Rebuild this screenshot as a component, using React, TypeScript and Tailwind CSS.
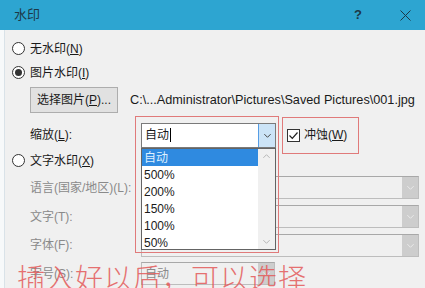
import React from "react";

const font = { fontFamily: '"Segoe UI", "Liberation Sans", "Noto Sans CJK SC", sans-serif' };

function Radio({ checked }: { checked?: boolean }) {
  return (
    <div className="w-[13px] h-[13px] rounded-full border border-[#333] bg-white flex items-center justify-center shrink-0">
      {checked && <div className="w-[7px] h-[7px] rounded-full bg-[#333]" />}
    </div>
  );
}

function Chevron({ color = "#777", size = 9 }: { color?: string; size?: number }) {
  return (
    <svg width={size} height={size} viewBox="0 0 10 10">
      <path d="M1.5 3.5 L5 7 L8.5 3.5" fill="none" stroke={color} strokeWidth="1.1" />
    </svg>
  );
}

function DisabledCombo({ w, text }: { w: string; text?: string }) {
  return (
    <div className={`${w} h-[23px] border border-[#bdbdbd] border-t-[#a8a8a8] bg-[#f0f0f0] flex items-center`}>
      <div className="flex-1 pl-[3px] text-[12px] text-[#8a8a8a]">{text}</div>
      <div className="w-[16px] h-full bg-[#cdcdcd] flex items-center justify-center">
        <Chevron color="#e9e9e9" />
      </div>
    </div>
  );
}

export default function App() {
  return (
    <div className="w-[425px] h-[288px] overflow-hidden relative bg-[#f0f0f0] text-[#1a1a1a]" style={font}>
      {/* title bar */}
      <div className="h-[30px] bg-[#2da5d1] flex items-center pl-[14px] pr-[14px]">
        <div className="text-[13px] text-[#1d3846] flex-1">水印</div>
        <div className="text-[13px] text-[#1d3846] font-bold mr-[38px]">?</div>
        <svg width="11" height="11" viewBox="0 0 11 11">
          <path d="M0.5 0.5 L10.5 10.5 M10.5 0.5 L0.5 10.5" stroke="#1d3846" strokeWidth="1" />
        </svg>
      </div>

      <div className="flex h-[258px]">
        <div className="w-[5px] bg-[#f7f9fa] border-r border-[#d9e2e8]" />
        <div className="flex-1 flex flex-col text-[12px] pl-[7px]">
          {/* 无水印 */}
          <div className="mt-[7px] h-[24px] flex items-center gap-[5px]">
            <Radio />
            <span>无水印(<u>N</u>)</span>
          </div>
          {/* 图片水印 */}
          <div className="h-[24px] flex items-center gap-[5px]">
            <Radio checked />
            <span>图片水印(<u>I</u>)</span>
          </div>
          {/* button row */}
          <div className="mt-[3px] h-[26px] flex items-center pl-[18px]">
            <div className="w-[88px] h-[26px] bg-[#e1e1e1] border border-[#adadad] flex items-center justify-center">
              选择图片(<u>P</u>)...
            </div>
            <div className="ml-[12px] whitespace-nowrap text-[12.7px]">
              C:\...Administrator\Pictures\Saved Pictures\001.jpg
            </div>
          </div>
          {/* 缩放 */}
          <div className="mt-[9px] h-[26px] flex items-center pl-[18px]">
            <div className="w-[111px]">缩放(<u>L</u>):</div>
            <div className="w-[135px] h-[25px] bg-white border border-[#7a7a7a] flex items-center">
              <div className="flex-1 pl-[3px] flex items-center">
                自动<span className="inline-block w-[1px] h-[14px] bg-black ml-[1px]" />
              </div>
              <div className="w-[17px] h-full bg-[#cce4f7] border-l border-[#569de5] flex items-center justify-center">
                <Chevron color="#444" />
              </div>
            </div>
            <div className="ml-[11px] flex items-center gap-[4px]">
              <div className="w-[13px] h-[13px] border border-[#333] bg-white flex items-center justify-center">
                <svg width="11" height="11" viewBox="0 0 11 11">
                  <path d="M1.5 5.5 L4.3 8.3 L9.5 2.5" fill="none" stroke="#222" strokeWidth="1.2" />
                </svg>
              </div>
              <span>冲蚀(<u>W</u>)</span>
            </div>
          </div>
          {/* 文字水印 */}
          <div className="h-[26px] flex items-center gap-[5px]">
            <Radio />
            <span>文字水印(<u>X</u>)</span>
          </div>
          {/* disabled rows */}
          {[
            ["语言(国家/地区)(L):", "w-[278px]", ""],
            ["文字(T):", "w-[278px]", ""],
            ["字体(F):", "w-[278px]", ""],
            ["字号(S):", "w-[134px]", "自动"],
          ].map(([label, w, t]) => (
            <div key={label} className="h-[29px] flex items-center pl-[18px]">
              <div className="w-[111px] text-[#8a8a8a]">{label}</div>
              <DisabledCombo w={w} text={t} />
            </div>
          ))}
        </div>
      </div>

      {/* dropdown list */}
      <div className="absolute left-[141px] top-[148px] w-[135px] h-[102px] bg-white border border-[#646464] flex text-[12px]">
        <div className="flex-1 flex flex-col">
          {["自动", "500%", "200%", "150%", "100%", "50%"].map((v, i) => (
            <div
              key={v}
              className={`h-[17px] flex items-center pl-[2px] ${i === 0 ? "bg-[#2f8ae0] text-[#dff0ff]" : ""}`}
            >
              {v}
            </div>
          ))}
        </div>
        <div className="w-[17px] bg-[#f0f0f0] flex flex-col items-center justify-between py-[3px]">
          <svg width="9" height="9" viewBox="0 0 10 10">
            <path d="M1.5 6.5 L5 3 L8.5 6.5" fill="none" stroke="#b5b5b5" strokeWidth="1.1" />
          </svg>
          <Chevron color="#b5b5b5" />
        </div>
      </div>

      {/* red highlight boxes */}
      <div className="absolute left-[135px] top-[116px] w-[144px] h-[137px] border border-[#e07a7a]" />
      <div className="absolute left-[282px] top-[117px] w-[77px] h-[37px] border border-[#e07a7a]" />

      {/* red caption */}
      <div
        className="absolute left-[17px] top-[257px] whitespace-nowrap text-[28px] leading-[40px] tracking-[1px] text-[#e45a5a] opacity-85"
        style={{ fontFamily: '"Noto Sans CJK SC", sans-serif', fontWeight: 300 }}
      >
        插入好以后，可以选择
      </div>
    </div>
  );
}
